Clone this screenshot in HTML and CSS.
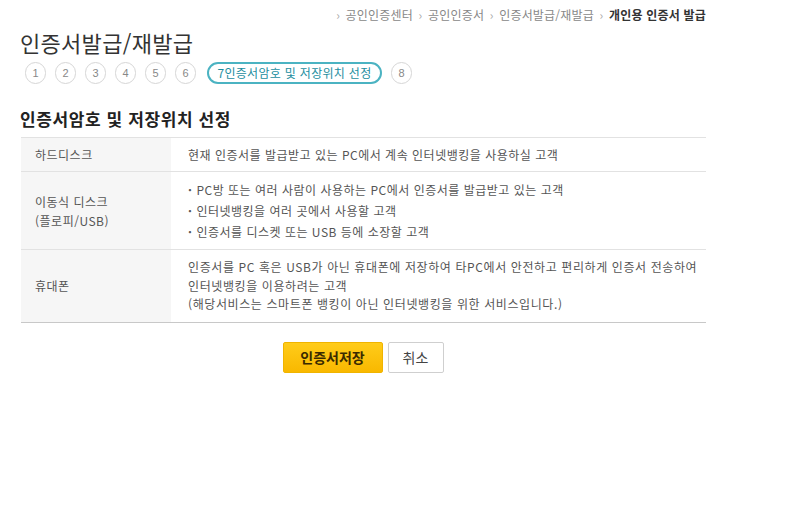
FILE: index.html
```html
<!DOCTYPE html>
<html lang="ko">
<head>
    <meta charset="UTF-8">
    <title>인증서발급/재발급</title>
    <link rel="stylesheet" href="styles.css">
</head>
<body>

<div class="content">
    <!-- 위치 -->
    <div class="location">
        <span class="sep">›</span> 공인인증센터
        <span class="sep">›</span> 공인인증서
        <span class="sep">›</span> 인증서발급/재발급
        <span class="sep">›</span> <strong>개인용 인증서 발급</strong>
    </div>

    <h1 class="page-title">인증서발급/재발급</h1>

    <ol class="steps">
        <li class="step">1</li>
        <li class="step">2</li>
        <li class="step">3</li>
        <li class="step">4</li>
        <li class="step">5</li>
        <li class="step">6</li>
        <li class="step on">7인증서암호 및 저장위치 선정</li>
        <li class="step">8</li>
    </ol>

    <h2 class="sub-title">인증서암호 및 저장위치 선정</h2>

    <table class="tbl-info">
        <colgroup>
            <col class="col-label">
            <col>
        </colgroup>
        <tbody>
            <tr>
                <th>하드디스크</th>
                <td>현재 인증서를 발급받고 있는 PC에서 계속 인터넷뱅킹을 사용하실 고객</td>
            </tr>
            <tr>
                <th>이동식 디스크<br>(플로피/USB)</th>
                <td>
                    <ul class="dot-list">
                        <li>PC방 또는 여러 사람이 사용하는 PC에서 인증서를 발급받고 있는 고객</li>
                        <li>인터넷뱅킹을 여러 곳에서 사용할 고객</li>
                        <li>인증서를 디스켓 또는 USB 등에 소장할 고객</li>
                    </ul>
                </td>
            </tr>
            <tr class="row-phone">
                <th>휴대폰</th>
                <td>인증서를 PC 혹은 USB가 아닌 휴대폰에 저장하여 타PC에서 안전하고 편리하게 인증서 전송하여<br>인터넷뱅킹을 이용하려는 고객<br>(해당서비스는 스마트폰 뱅킹이 아닌 인터넷뱅킹을 위한 서비스입니다.)</td>
            </tr>
        </tbody>
    </table>

    <div class="btn-area">
        <button class="btn btn-yellow">인증서저장</button>
        <button class="btn btn-white">취소</button>
    </div>
</div>

</body>
</html>
```

FILE: styles.css
```css
body {
    margin: 0;
    padding: 0;
    background-color: #fff;
    font-family: "Noto Sans CJK KR", "Noto Sans", sans-serif;
    font-size: 12px;
    color: #555;
}

.content {
    width: 686px;
    padding-left: 20px;
}

/* 위치 */
.location {
    margin-top: 7px;
    text-align: right;
    font-size: 12px;
    line-height: 16px;
    color: #888;
    letter-spacing: 0.2px;
}

.location .sep {
    color: #aaa;
    margin: 0 2px;
}

.location strong {
    color: #333;
}

.page-title {
    margin: 5px 0 0;
    font-size: 22px;
    font-weight: normal;
    line-height: 28px;
    color: #333;
    letter-spacing: 0.3px;
}

/* 단계 */
.steps {
    display: flex;
    gap: 9px;
    margin: 6px 0 0 5px;
    padding: 0;
    list-style: none;
}

.step {
    box-sizing: border-box;
    min-width: 21px;
    height: 22px;
    padding: 0 6px;
    border: 1px solid #d6d6d6;
    border-radius: 11px;
    font-family: "Liberation Sans", "Noto Sans CJK KR", sans-serif;
    font-size: 11px;
    line-height: 20px;
    color: #888;
    text-align: center;
}

.step.on {
    width: 175px;
    margin-left: 2px;
    border: 2px solid #4bb3c2;
    line-height: 18px;
    color: #1d8ea0;
    font-family: "Noto Sans CJK KR", sans-serif;
    font-size: 12px;
    letter-spacing: 0.3px;
}

.sub-title {
    margin: 23px 0 0;
    font-size: 17px;
    line-height: 24px;
    color: #222;
    letter-spacing: 0.6px;
}

/* 표 */
.tbl-info {
    width: 685px;
    margin: 6px 0 0 1px;
    border-collapse: collapse;
    border-top: 1px solid #e2e2e2;
    border-bottom: 1px solid #c8c8c8;
    letter-spacing: 0.5px;
}

.tbl-info .col-label {
    width: 150px;
}

.tbl-info th,
.tbl-info td {
    padding: 7px 0;
    line-height: 19px;
    text-align: left;
    font-weight: normal;
    vertical-align: middle;
}

.tbl-info tr + tr th,
.tbl-info tr + tr td {
    border-top: 1px solid #e2e2e2;
}

.tbl-info th {
    padding-left: 14px;
    background-color: #f6f6f6;
    color: #555;
}

.tbl-info td {
    padding-left: 17px;
}

.row-phone td {
    padding: 8px 0 8px 17px;
    line-height: 18.5px;
    letter-spacing: 0.6px;
}

.dot-list {
    margin: 0;
    padding: 0;
    list-style: none;
}

.dot-list li {
    line-height: 21px;
}

.dot-list li::before {
    content: "·";
    margin-right: 4px;
    font-weight: bold;
}

/* 버튼 */
.btn-area {
    display: flex;
    justify-content: center;
    gap: 5px;
    margin-top: 19px;
}

.btn {
    height: 31px;
    border-radius: 2px;
    font-family: "Noto Sans CJK KR", sans-serif;
    font-size: 14px;
    cursor: pointer;
}

.btn-yellow {
    width: 100px;
    border: 1px solid #f0b400;
    background: linear-gradient(#ffcc1a, #f9b800);
    color: #3a2a00;
    font-weight: bold;
}

.btn-white {
    width: 56px;
    border: 1px solid #cfcfcf;
    background-color: #fff;
    color: #444;
}
```
